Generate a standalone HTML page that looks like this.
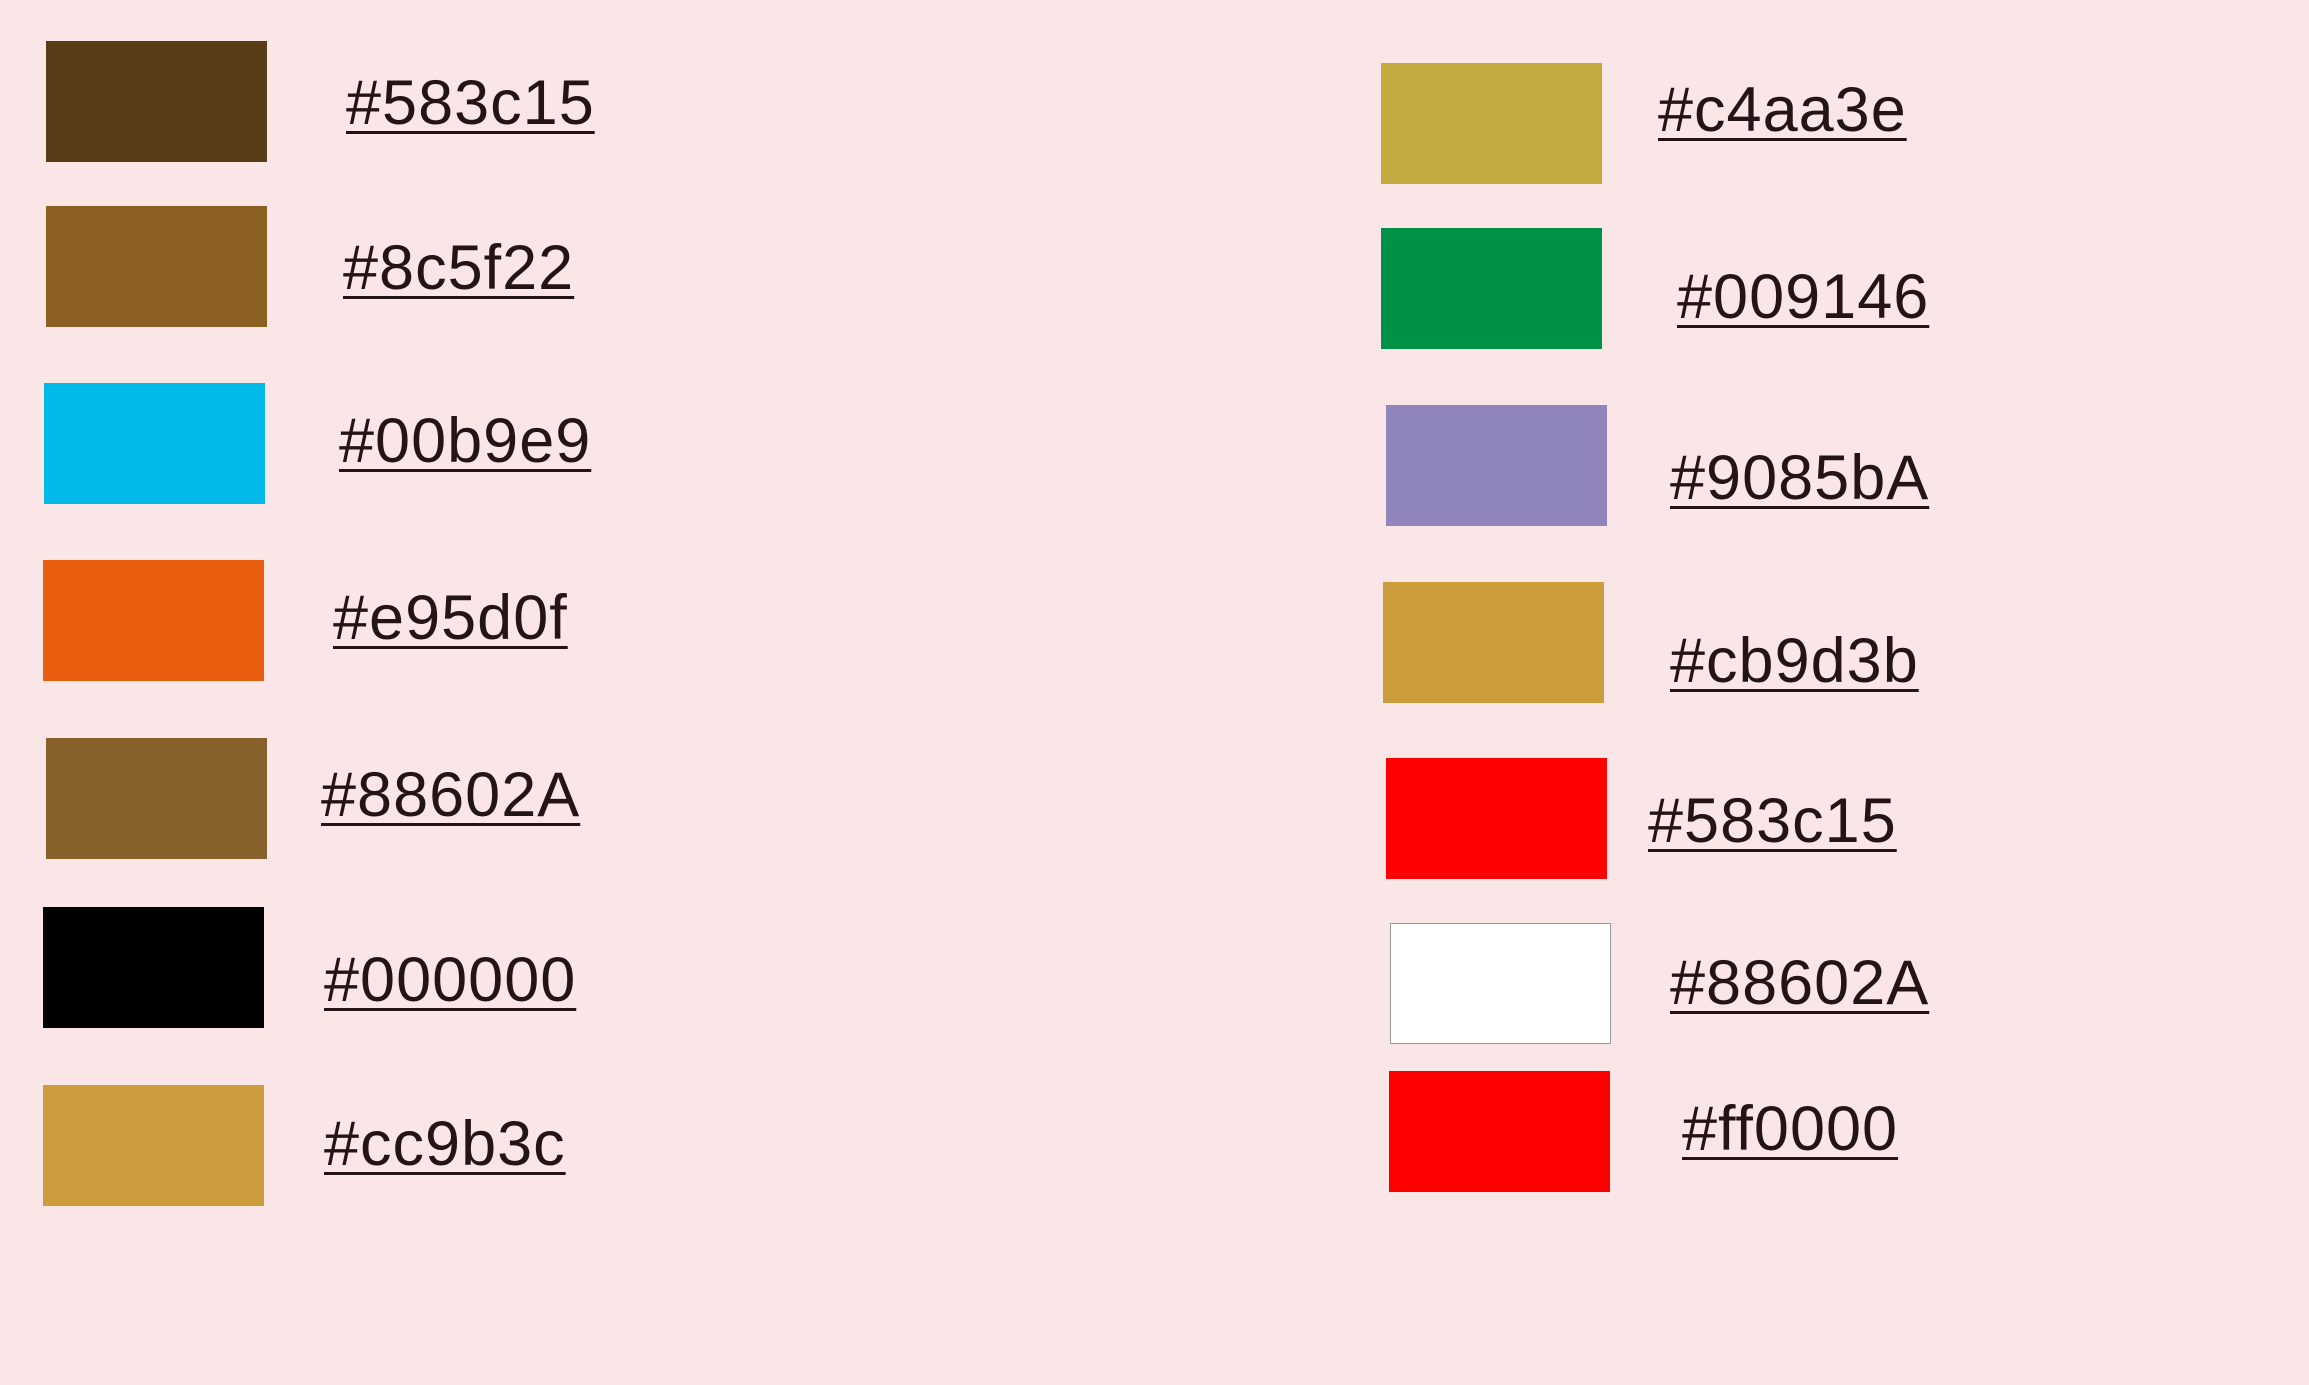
<!DOCTYPE html>
<html><head><meta charset="utf-8"><style>
html,body{margin:0;padding:0}
body{width:2309px;height:1385px;background:#fbe6e7;position:relative;overflow:hidden}
.b{position:absolute;width:221px;height:121px}
.t{position:absolute;font-family:"Liberation Sans",sans-serif;font-size:63px;line-height:66px;height:66px;color:#231418;text-decoration:underline;text-decoration-thickness:3px;text-underline-offset:7px;letter-spacing:1px;white-space:nowrap}
</style></head><body>
<div class="b" style="left:46px;top:41px;background:#583c15"></div>
<div class="b" style="left:46px;top:206px;background:#8c5f22"></div>
<div class="b" style="left:44px;top:383px;background:#00b9e9"></div>
<div class="b" style="left:43px;top:560px;background:#e95d0f"></div>
<div class="b" style="left:46px;top:738px;background:#88602a"></div>
<div class="b" style="left:43px;top:907px;background:#000"></div>
<div class="b" style="left:43px;top:1085px;background:#cc9b3c"></div>

<div class="b" style="left:1381px;top:63px;background:#c4aa3e"></div>
<div class="b" style="left:1381px;top:228px;background:#009146"></div>
<div class="b" style="left:1386px;top:405px;background:#9085ba"></div>
<div class="b" style="left:1383px;top:582px;background:#cb9d3b"></div>
<div class="b" style="left:1386px;top:758px;background:#ff0000"></div>
<div class="b" style="left:1390px;top:923px;background:#fff;box-sizing:border-box;border:1px solid #999"></div>
<div class="b" style="left:1389px;top:1071px;background:#ff0000"></div>

<div class="t" style="left:346px;top:70px">#583c15</div>
<div class="t" style="left:343px;top:235px">#8c5f22</div>
<div class="t" style="left:339px;top:408px">#00b9e9</div>
<div class="t" style="left:333px;top:585px">#e95d0f</div>
<div class="t" style="left:321px;top:762px">#88602A</div>
<div class="t" style="left:324px;top:947px">#000000</div>
<div class="t" style="left:324px;top:1111px">#cc9b3c</div>

<div class="t" style="left:1658px;top:77px">#c4aa3e</div>
<div class="t" style="left:1677px;top:264px">#009146</div>
<div class="t" style="left:1670px;top:445px">#9085bA</div>
<div class="t" style="left:1670px;top:628px">#cb9d3b</div>
<div class="t" style="left:1648px;top:788px">#583c15</div>
<div class="t" style="left:1670px;top:950px">#88602A</div>
<div class="t" style="left:1682px;top:1096px">#ff0000</div>
</body></html>
